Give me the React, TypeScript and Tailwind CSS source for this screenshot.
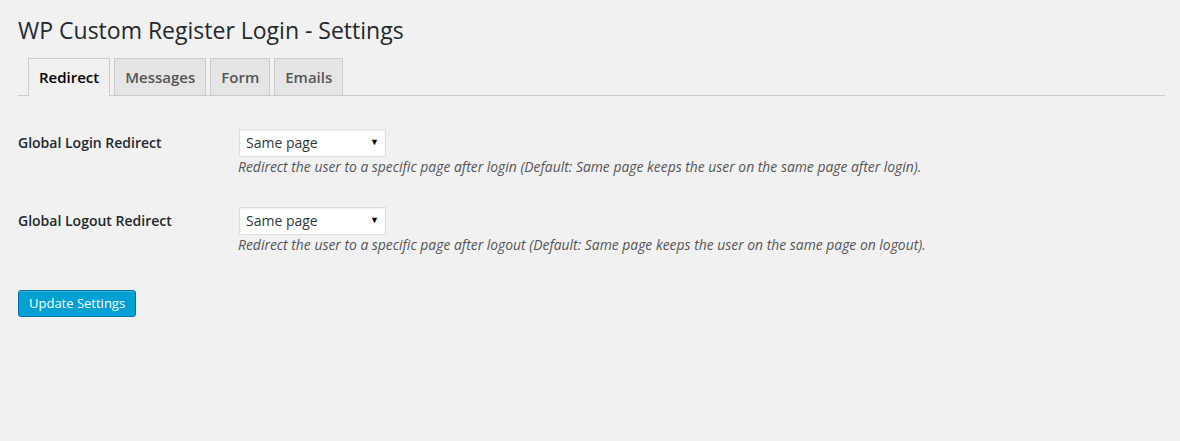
import { useState } from "react"

const tabs = ['Redirect', 'Messages', 'Form', 'Emails']

const options = ['Same page', 'Home page', 'Custom page']

export default function App() {
  const [active, setActive] = useState<string>('Redirect')
  const [loginRedirect, setLoginRedirect] = useState<string>('Same page')
  const [logoutRedirect, setLogoutRedirect] = useState<string>('Same page')

  const rows = [
    {
      label: 'Global Login Redirect',
      value: loginRedirect,
      setValue: setLoginRedirect,
      help: 'Redirect the user to a specific page after login (Default: Same page keeps the user on the same page after login).'
    },
    {
      label: 'Global Logout Redirect',
      value: logoutRedirect,
      setValue: setLogoutRedirect,
      help: 'Redirect the user to a specific page after logout (Default: Same page keeps the user on the same page on logout).'
    }
  ]

  return (
    <main className="min-h-[441px] bg-[#f1f1f1] pl-[18px] pr-[15px] font-['Open_Sans','Liberation_Sans',sans-serif] text-[#444]">
      <h1 className="pt-[16px] text-[23px] leading-[29px] font-normal text-[#23282d]">WP Custom Register Login - Settings</h1>
      <nav className="mt-[13px] flex gap-[4px] border-b border-[#ccc] pl-[10px]">
        {tabs.map((tab) => (
          <button
            key={tab}
            onClick={() => setActive(tab)}
            className={
              tab === active
                ? "-mb-px border border-b-0 border-[#ccc] bg-[#f1f1f1] px-[10px] pt-[6px] pb-[7px] text-[15px] leading-[24px] font-semibold text-black"
                : "border border-b-0 border-[#ccc] bg-[#e5e5e5] px-[10px] pt-[6px] pb-[6px] text-[15px] leading-[24px] font-semibold text-[#555]"
            }
          >
            {tab}
          </button>
        ))}
      </nav>
      <form onSubmit={(e) => e.preventDefault()} className="pt-[33px]">
        {rows.map((row) => (
          <div key={row.label} className="mb-[30px] flex">
            <label className="w-[220px] shrink-0 pt-[4px] text-[14px] leading-[20px] font-semibold text-[#23282d]">{row.label}</label>
            <div className="flex flex-col">
              <div className="relative ml-[1px] w-[147px]">
                <select
                  value={row.value}
                  onChange={(e) => row.setValue(e.target.value)}
                  className="h-[28px] w-full appearance-none border border-[#ddd] bg-white pl-[6px] text-[14px] leading-[26px] text-[#32373c] shadow-[inset_0_1px_2px_rgba(0,0,0,0.07)] outline-none"
                >
                  {options.map((o) => <option key={o} value={o}>{o}</option>)}
                </select>
                <span className="pointer-events-none absolute top-[7px] right-[7px] text-[9px] leading-[12px] text-black">▼</span>
              </div>
              <p className="text-[13.9px] leading-[20px] italic text-[#555]">{row.help}</p>
            </div>
          </div>
        ))}
        <button type="submit" className="mt-[5px] h-[27px] rounded-[3px] border border-[#0073aa] bg-[#00a0d2] px-[10px] pb-px text-[13px] leading-[24px] text-white shadow-[inset_0_1px_0_rgba(120,200,230,0.5)]">Update Settings</button>
      </form>
    </main>
  )
}
